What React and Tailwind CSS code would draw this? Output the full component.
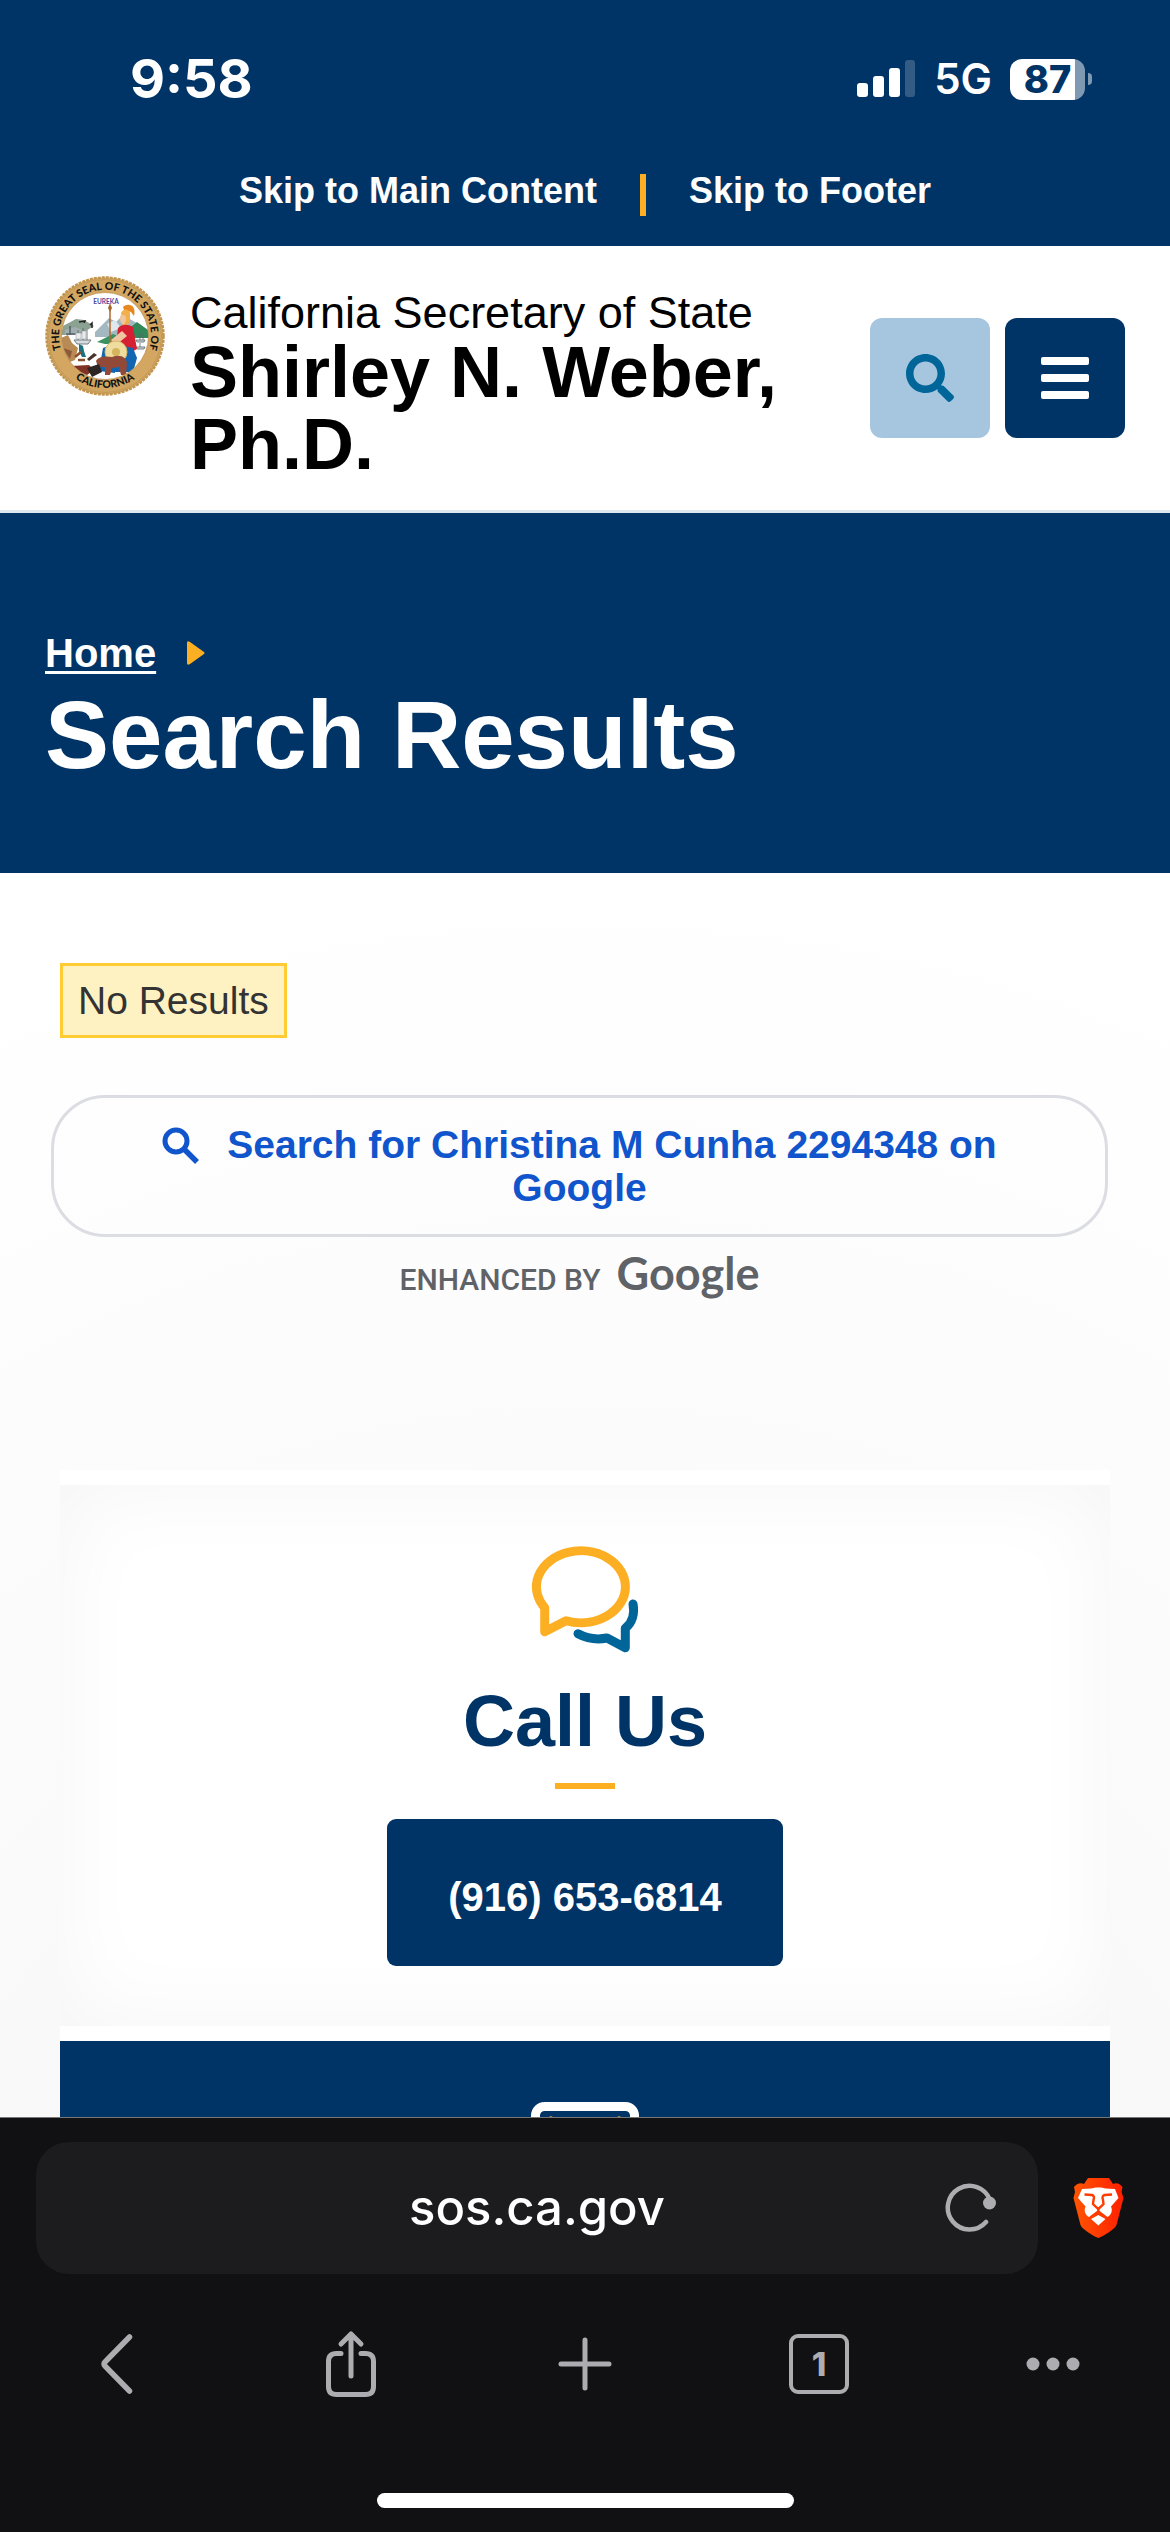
function StatusBar() {
  return (
    <div className="flex h-[112px] items-center justify-between pt-[46px] pr-[78px] pl-[130px] font-['Inter',sans-serif] text-white">
      <time className="text-[54px] leading-[66px] font-bold">9:58</time>
      <div className="flex items-center">
        <svg className="h-[42px] w-[60px]" viewBox="0 0 60 42" fill="#fff" aria-label="Signal">
          <rect x="1" y="25" width="11" height="14" rx="3" />
          <rect x="17" y="18" width="11" height="21" rx="3" />
          <rect x="33" y="10" width="11" height="29" rx="3" />
          <rect x="49" y="2" width="10" height="37" rx="3" opacity="0.2" />
        </svg>
        <span className="ml-[18px] text-[42px] leading-[42px] font-semibold">5G</span>
        <div className="ml-[18px] flex h-[41px] w-[75px] items-center justify-center rounded-[12px] bg-[linear-gradient(90deg,#ffffff_65px,#8099b2_65px)] text-[38px] leading-[41px] font-extrabold text-[#003466]">87</div>
        <div className="ml-[3px] h-[12px] w-[4px] rounded-r-full bg-[#8099b2]" />
      </div>
    </div>
  );
}

function Seal() {
  return (
    <svg className="h-[120px] w-[120px] shrink-0" viewBox="0 0 120 120" role="img" aria-label="The Great Seal of the State of California">
      <defs>
        <path id="ringTop" d="M24.200 88.600A46 46 0 1 1 95.800 88.600" />
        <path id="ringBottom" d="M18 91A52.500 52.500 0 0 0 102 91" />
        <clipPath id="inner"><circle cx="60" cy="60" r="43.500" /></clipPath>
      </defs>
      <circle cx="60" cy="60" r="58.500" fill="#d3a762" />
      <circle cx="60" cy="60" r="58.500" fill="none" stroke="#c2954f" strokeWidth="2.500" strokeDasharray="3 1" />
      <circle cx="60" cy="60" r="56.500" fill="none" stroke="#c39a58" strokeWidth="1" />
      <circle cx="60" cy="60" r="43.500" fill="#fff" />
      <g clipPath="url(#inner)">
        <path d="M18 50l13-7 8 1 10 6-5 3-10 6H16z" fill="#8ba192" />
        <path d="M20 54l10-3 8 3-6 5H20z" fill="#a0aeb0" />
        <path d="M50 56l14-14 7 4 7-7 12 7 15 9v6H50z" fill="#a4b8c2" />
        <path d="M62 48l8-4 6 8-10 4z" fill="#dfe8ec" />
        <path d="M82 54l10-8 15 11v5H84z" fill="#33885a" />
        <path d="M52 66l16-8 10 4v6H60z" fill="#3a9164" />
        <path d="M16 62l7-3 4 8 6 5-3 12-10 4z" fill="#b98a54" />
        <path d="M18 72l9 3-2 8z" fill="#8c5a3a" />
        <path d="M25 50v9M21 58h9" stroke="#58616a" strokeWidth="1.500" />
        <path d="M29 64h17l-3 4H32z" fill="#d8dcdf" stroke="#59636b" strokeWidth=".8" />
        <path d="M33 54v10M38 52v12M42 54v10" stroke="#59636b" strokeWidth=".8" />
        <path d="M31 57h5v6h-5zM37 55h4v8h-4z" fill="#e9ebed" stroke="#8d959b" strokeWidth=".5" />
        <path d="M91 64h9l-1 2h-7zM91 71h9l-1 2h-7z" fill="#d8dcdf" stroke="#59636b" strokeWidth=".8" />
        <path d="M95 57v7M98 58v6M95 67v4" stroke="#59636b" strokeWidth=".8" />
        <path d="M34 46l6-1-1 2M45 49l2-2v5" stroke="#222" strokeWidth="1.500" fill="none" />
        <path d="M78 31c5-5 14-2 11 9l-3-4-7-2z" fill="#e8871e" />
        <path d="M76 37c3-5 8-4 9 0v10l-7 4z" fill="#f2b04b" />
        <path d="M75 41c0-3 6-3 6 1s-1 6-3 6-3-3-3-7z" fill="#f0c6a0" />
        <path d="M73 52c4-4 10-4 15-1l4 22-9 5-12-10z" fill="#d61f32" />
        <path d="M66 64l11-9 5 5-11 9z" fill="#f0c6a0" />
        <path d="M58 72l10-4 20 4 4 10-4 14-24 0-8-13z" fill="#1265b0" />
        <path d="M52 90l16-4 2 11-16-2z" fill="#1265b0" />
        <circle cx="71" cy="76" r="11" fill="#efdc9f" stroke="#d6b868" />
        <circle cx="71" cy="76" r="4" fill="#d5b45e" />
        <path d="M65 31v35" stroke="#b06a2b" strokeWidth="1.500" />
        <path d="M65 27l2 5-2 4-2-4z" fill="#a4682e" />
        <path d="M51 85c3-5 10-5 16-4 8-3 15 0 15 7l-1 11h-5l-2-8-7 1-2 7h-5l0-8-7 0z" fill="#934938" />
        <path d="M26 90l18-1 5 5-7 5-12-3z" fill="#7e3324" />
        <path d="M42 92l12-4 3 8-10 5z" fill="#2c2522" />
        <path d="M34 68l4 2 1 5 2 6h-4l-3-6z" fill="#1e6f7f" />
        <path d="M30 81l6-5M33 84l7 0" stroke="#8c4f2d" strokeWidth="2.500" />
        <path d="M42 83l7-6 3 2-8 6z" fill="#47342a" />
      </g>
      <circle cx="60" cy="60" r="43.500" fill="none" stroke="#b98d4a" strokeWidth=".7" />
      <text className="font-['Lato',sans-serif]" fontSize="10.500" fontWeight="900" fill="#111" textAnchor="middle">
        <textPath href="#ringTop" startOffset="50%">THE GREAT SEAL OF THE STATE OF</textPath>
      </text>
      <text className="font-['Lato',sans-serif]" fontSize="10.500" fontWeight="900" fill="#111" textAnchor="middle">
        <textPath href="#ringBottom" startOffset="50%">CALIFORNIA</textPath>
      </text>
      <text x="61" y="28" className="font-['Lato',sans-serif]" fontSize="6.500" fontWeight="700" fill="#51469b" textAnchor="middle">EUREKA</text>
    </svg>
  );
}

function Header() {
  return (
    <header className="flex items-start border-b-[3px] border-[#dce7f0] bg-white px-[45px] pt-[30px] pb-[30px]">
      <Seal />
      <a href="#home" className="mt-[14px] ml-[25px] flex-1 text-black">
        <span className="block text-[45px] leading-[46px]">California Secretary of State</span>
        <span className="block text-[72px] leading-[72px] font-bold">Shirley N. Weber, Ph.D.</span>
      </a>
      <div className="mt-[42px] ml-6 flex gap-[15px]">
        <button aria-label="Search" className="flex h-[120px] w-[120px] items-center justify-center rounded-[12px] bg-[#a6c5df]">
          <svg className="h-[48px] w-[48px]" viewBox="0 0 512 512" fill="#006699">
            <path d="M505 442.700L405.300 343c-4.500-4.500-10.600-7-17-7H372c27.600-35.300 44-79.700 44-128C416 93.100 322.900 0 208 0S0 93.100 0 208s93.100 208 208 208c48.300 0 92.700-16.400 128-44v16.300c0 6.400 2.500 12.500 7 17l99.700 99.700c9.400 9.400 24.600 9.400 33.900 0l28.300-28.300c9.400-9.400 9.400-24.600.1-34zM208 336c-70.700 0-128-57.200-128-128 0-70.700 57.200-128 128-128 70.700 0 128 57.200 128 128 0 70.700-57.200 128-128 128z" />
          </svg>
        </button>
        <button aria-label="Menu" className="flex h-[120px] w-[120px] flex-col items-center justify-center gap-[9px] rounded-[12px] bg-[#003466]">
          <span className="h-2 w-12 rounded-[2px] bg-white" />
          <span className="h-2 w-12 rounded-[2px] bg-white" />
          <span className="h-2 w-12 rounded-[2px] bg-white" />
        </button>
      </div>
    </header>
  );
}

function Results() {
  return (
    <section className="px-[60px] pt-[90px]">
      <p className="w-fit border-[3px] border-[#ffcc33] bg-[#fff2c2] px-[15px] py-[12px] text-[39px] leading-[45px] text-[#333]">No Results</p>
      <div className="mt-[57px] mr-[2px] -ml-[9px]">
        <a href="#google" className="block rounded-[54px] border-[3px] border-[#dcdde3] px-[90px] pt-[25px] pb-[25px] text-center text-[39px] leading-[43px] font-bold text-[#1155cc]">
          <svg className="mr-[28px] inline-block h-[37px] w-[37px] align-[-6px]" viewBox="0 0 37 37" fill="none" stroke="#1155cc" strokeWidth="5">
            <circle cx="14" cy="14" r="11" />
            <path d="M22 22l13 13" strokeWidth="5.500" />
          </svg>
          Search for Christina M Cunha 2294348 on Google
        </a>
        <div className="mt-[8px] flex h-[60px] items-baseline justify-center gap-[16px] text-[#5f6368]">
          <span className="font-['Roboto',sans-serif] text-[30px] leading-[56px] font-medium">ENHANCED BY</span>
          <span className="font-['Lato',sans-serif] text-[45px] leading-[56px] font-bold">Google</span>
        </div>
      </div>
    </section>
  );
}

function Contact() {
  return (
    <section className="mx-[60px] mt-[165px]">
      <div className="border-y-[15px] border-white bg-white">
        <div className="flex flex-col items-center pt-[60px] pb-[60px] shadow-[inset_0_0_90px_rgba(0,0,0,0.045)]">
          <svg className="h-[108px] w-[110px]" viewBox="0 0 110 108" fill="none" strokeWidth="9" strokeLinejoin="round" strokeLinecap="round">
            <path d="M14.700 62.700V86.700L36 75.700A44.500 36 0 1 0 14.700 62.700Z" stroke="#fdaf24" />
            <path d="M103 59C105 69 102 78 95.300 83.300V102.700L77 93C67 95 57 93.500 48 88.700" stroke="#006699" />
          </svg>
          <h2 className="mt-[26px] text-[72px] leading-[84px] font-bold text-[#003466]">Call Us</h2>
          <div className="mt-[20px] h-[6px] w-[60px] bg-[#fdaf24]" />
          <a href="tel:9166536814" className="mt-[30px] rounded-[9px] bg-[#003466] px-[61px] pt-[54px] pb-[45px] text-[40px] leading-[48px] font-bold text-white">(916) 653-6814</a>
        </div>
      </div>
      <div className="flex h-[76px] items-start justify-center overflow-hidden bg-[#003466] pt-[61px]">
        <svg className="h-[84px] w-[108px] shrink-0" viewBox="0 0 108 84" fill="none">
          <rect x="4.500" y="4.500" width="99" height="75" rx="9" stroke="#fff" strokeWidth="9" />
          <path d="M20 18L54 46L88 18" stroke="#fdaf24" strokeWidth="7" strokeLinecap="round" />
        </svg>
      </div>
    </section>
  );
}

function BrowserBar() {
  const tool = "flex h-[72px] items-center justify-center";
  return (
    <footer id="footer" className="border-t border-[#777] bg-[#111113] pt-[24px] pb-[24px]">
      <div className="flex items-center pr-[45px] pl-[36px]">
        <div className="relative flex h-[132px] flex-1 items-center rounded-[33px] bg-[#1c1c1e]">
          <input aria-label="Address" defaultValue="sos.ca.gov" className="w-full bg-transparent text-center font-['Inter',sans-serif] text-[49px] leading-[60px] font-medium text-white outline-none" />
          <button aria-label="Reload" className="absolute right-[40px]">
            <svg className="h-[54px] w-[54px]" viewBox="0 0 54 54" fill="none" stroke="#adadb1" strokeWidth="4.500" strokeLinecap="round">
              <path d="M42 41A21.800 21.800 0 1 1 46 19" />
              <circle cx="45.500" cy="22" r="6.500" fill="#adadb1" stroke="none" />
            </svg>
          </button>
        </div>
        <button aria-label="Brave Shields" className="ml-[34px]">
          <svg className="h-[60px] w-[53px]" viewBox="0 0 51 60">
            <defs><linearGradient id="brave"><stop stopColor="#ff5500" /><stop offset="1" stopColor="#ff2000" /></linearGradient></defs>
            <path d="M15 0H36L40 6C44 4 47 6 49.500 9L48.500 14L50.500 20L43.500 47C42 51 31 58 25.300 60C20 58 9 51 7.500 47L.500 20L2 14L1 9C3.500 6 7 4 11 6Z" fill="url(#brave)" />
            <path d="M9 11L18 10.500C22 9 29 9 33 10.500L42 11L45.500 20L38 28.500C40 33 38 37 34.500 39L25.300 32L16 39C12.500 37 10.500 33 12.500 28.500L5 20Z" fill="#fff" />
            <path d="M11.500 16.500L19 17Q22 18 20.500 22L20 26L25.300 31L30.500 26L30 22Q28.500 18 31.500 17L39 16.500" fill="none" stroke="#ff3c00" strokeWidth="2.400" />
            <path d="M25.300 31V36M18 39.500L25.300 34L32.500 39.500" fill="none" stroke="#ff3c00" strokeWidth="2.400" />
            <path d="M25.300 37L32.500 41L25.300 47.500L18 41Z" fill="#fff" />
          </svg>
        </button>
      </div>
      <nav aria-label="Browser" className="mt-[54px] grid grid-cols-5">
        <button aria-label="Back" className={tool}>
          <svg className="h-[66px] w-[36px]" viewBox="0 0 36 66" fill="none" stroke="#adadb1" strokeWidth="5.500" strokeLinecap="round" strokeLinejoin="round"><path d="M30.500 6L6 31Q4 33 6 35L30.500 60" /></svg>
        </button>
        <button aria-label="Share" className={tool}>
          <svg className="h-[68px] w-[54px]" viewBox="0 0 54 68" fill="none" stroke="#adadb1" strokeWidth="5" strokeLinecap="round" strokeLinejoin="round">
            <path d="M17 23.500H12.500Q4.500 23.500 4.500 31.500V56.500Q4.500 64.500 12.500 64.500H41.500Q49.500 64.500 49.500 56.500V31.500Q49.500 23.500 41.500 23.500H37M27 46V4M17 14L27 4L37 14" />
          </svg>
        </button>
        <button aria-label="New tab" className={tool}>
          <svg className="h-[54px] w-[54px]" viewBox="0 0 54 54" stroke="#adadb1" strokeWidth="5" strokeLinecap="round"><path d="M27 3V51M3 27H51" /></svg>
        </button>
        <button aria-label="Tabs" className={tool}>
          <span className="flex h-[60px] w-[60px] items-center justify-center rounded-[9px] border-4 border-[#adadb1] font-['Inter',sans-serif] text-[33px] leading-[50px] font-extrabold text-[#adadb1]">1</span>
        </button>
        <button aria-label="More" className={tool}>
          <svg className="h-[14px] w-[54px]" viewBox="0 0 54 14" fill="#adadb1"><circle cx="7" cy="7" r="6.500" /><circle cx="27" cy="7" r="6.500" /><circle cx="47" cy="7" r="6.500" /></svg>
        </button>
      </nav>
      <div className="mx-auto mt-[93px] h-[15px] w-[417px] rounded-full bg-white" />
    </footer>
  );
}

export default function App() {
  return (
    <div className="w-full bg-white font-['Liberation_Sans',Arial,sans-serif]">
      <div className="bg-[#003466]">
        <StatusBar />
        <nav aria-label="Skip links" className="flex items-start justify-center gap-[43px] pt-[62px] pb-[30px] text-[36px] leading-[34px] font-bold text-white">
          <a href="#main">Skip to Main Content</a>
          <span className="h-[42px] w-[6px] bg-[#fdaf24]" />
          <a href="#footer">Skip to Footer</a>
        </nav>
      </div>
      <Header />
      <div className="bg-[#003466] px-[45px] pt-[114px] pb-[82px] text-white">
        <nav aria-label="Breadcrumb" className="flex items-center gap-[31px] text-[40px] leading-[52px] font-bold">
          <a href="#home" className="underline decoration-[3px] underline-offset-[4px]">Home</a>
          <svg className="h-[24px] w-[18px]" viewBox="0 0 18 24" fill="#fdaf24"><path d="M0 2Q0-1 3 1L17 11Q18 12 17 13L3 23Q0 25 0 22Z" /></svg>
        </nav>
        <h1 className="text-[96px] leading-[112px] font-bold">Search Results</h1>
      </div>
      <main id="main" className="bg-[radial-gradient(circle_1540px_at_50%_1527px,#f5f5f5,#ffffff)]">
        <Results />
        <Contact />
      </main>
      <BrowserBar />
    </div>
  );
}
